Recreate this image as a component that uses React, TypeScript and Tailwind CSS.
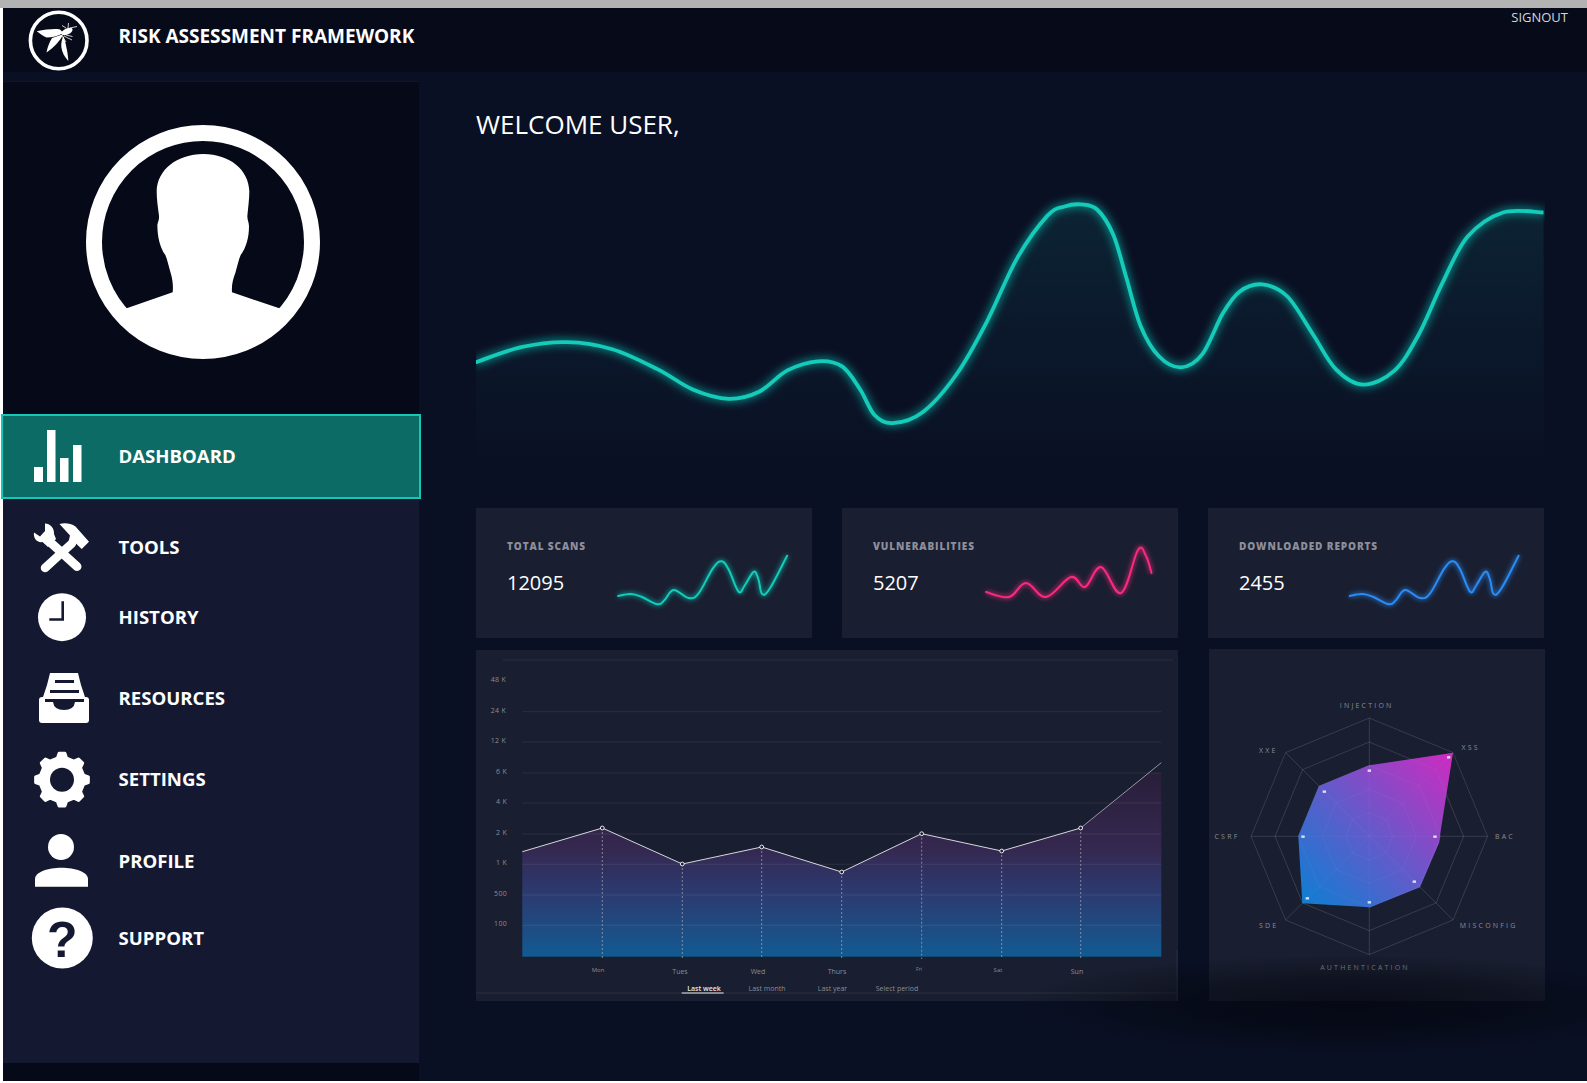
import React from "react";

type P = [number, number];

function smooth(pts: P[], t = 0.5): string {
  let d = `M${pts[0][0]} ${pts[0][1]}`;
  for (let i = 0; i < pts.length - 1; i++) {
    const p0 = pts[i - 1] || pts[i];
    const p1 = pts[i];
    const p2 = pts[i + 1];
    const p3 = pts[i + 2] || p2;
    const k = t / 3;
    const c1x = p1[0] + (p2[0] - p0[0]) * k;
    const c1y = p1[1] + (p2[1] - p0[1]) * k;
    const c2x = p2[0] - (p3[0] - p1[0]) * k;
    const c2y = p2[1] - (p3[1] - p1[1]) * k;
    d += ` C${c1x.toFixed(1)} ${c1y.toFixed(1)} ${c2x.toFixed(1)} ${c2y.toFixed(1)} ${p2[0].toFixed(1)} ${p2[1].toFixed(1)}`;
  }
  return d;
}

const R = 1.0121;
const waveRaw: P[] = [
  [470, 358], [515, 343], [560, 338], [605, 345], [650, 365], [685, 385], [720, 394], [750, 387], [778, 366], [808, 357], [832, 362], [850, 385], [864, 410], [882, 418], [912, 407], [945, 370], [975, 318], [1005, 255], [1035, 213], [1052, 204], [1068, 202], [1084, 207], [1100, 232], [1113, 275], [1127, 322], [1145, 352], [1167, 363], [1188, 350], [1208, 310], [1225, 288], [1247, 281], [1272, 293], [1297, 330], [1320, 365], [1347, 380], [1378, 366], [1402, 330], [1425, 280], [1450, 234], [1485, 210], [1525, 210],
];
const wave: P[] = waveRaw.map(([x, y]) => [x * R, y * R]);

const teal: P[] = ([
  [415, 288], [450, 282], [480, 290], [525, 313], [545, 300], [570, 270], [612, 294], [640, 280], [680, 205], [705, 184], [725, 210], [752, 275], [770, 255], [795, 215], [808, 240], [818, 282], [840, 265], [888, 167],
] as P[]).map(([x, y]) => [470 + x / 2.8, 500 + y / 3]);
const blue: P[] = teal.map(([x, y]) => [x + 732.5, y]);
const pink: P[] = [
  [986, 592], [1009, 597], [1026, 583], [1046, 597], [1071, 577], [1085, 587], [1101, 567], [1121, 593], [1138, 550], [1146, 556], [1151.5, 573],
];

function Logo() {
  return (
    <svg viewBox="24 8 72 64" className="w-[72px] h-[64px] shrink-0">
      <circle cx="58.7" cy="40.5" r="28.3" fill="none" stroke="#fff" strokeWidth="3.6" />
      <path d="M36.7 31.2 C46 29.5 55 28.5 60 29.5 L63.5 33 C58 36 52 37.5 46.5 37.5 C43 36 40 33.5 36.7 31.2 Z" fill="#fff" />
      <path d="M63.5 34 C60 41 54 47.5 46.5 52.5 C47.5 47 49.5 42 52 38 L58 36 Z" fill="#fff" />
      <path d="M63.5 36 C66 44 68 54 68.3 61 C64.5 57 62 52 61.3 47 C61 43 61.8 39 63.5 36 Z" fill="#fff" />
      <ellipse cx="67" cy="31.5" rx="6" ry="3" transform="rotate(-25 67 31.5)" fill="#fff" />
      <g stroke="#fff" strokeWidth="0.8" fill="none">
        <path d="M70 28 L77 26.5 M68 28 L68.5 23 M66 28 L62 25.5 M64 36 L72 40 M66 35 L72.5 36.5 M62 36 L66 42" />
      </g>
    </svg>
  );
}

function Avatar() {
  return (
    <svg viewBox="0 0 702 702" className="w-[234px] h-[234px]">
      <defs>
        <clipPath id="avatarClip">
          <circle cx="351" cy="351" r="310" />
        </clipPath>
      </defs>
      <g clipPath="url(#avatarClip)">
        <path
          transform="translate(-78 -46)"
          d="M200 596 L338 548 C340 530 338 510 332 490 C326 470 322 450 316 436 C300 415 292 380 292 345 C294 335 298 330 297 318 C294 295 290 270 290 245 C292 180 350 134 430 133 C510 134 566 180 568 245 C568 270 564 295 562 320 C562 332 567 338 567 350 C567 385 558 415 542 436 C536 450 532 470 526 490 C520 505 514 525 516 548 L658 596 L820 900 L40 900 Z"
          fill="#fff"
        />
      </g>
      <circle cx="351" cy="351" r="327" fill="none" stroke="#fff" strokeWidth="48" />
    </svg>
  );
}

const DARK = "#141931";

function IconDashboard() {
  return (
    <svg viewBox="0 0 60 60" className="w-[60px] h-[60px] overflow-visible">
      <rect x="2" y="41" width="9" height="15" fill="#fff" />
      <rect x="15" y="4" width="8.5" height="52" fill="#fff" />
      <rect x="28" y="32" width="8.5" height="24" fill="#fff" />
      <rect x="41" y="19" width="8.5" height="37" fill="#fff" />
    </svg>
  );
}

function IconTools() {
  return (
    <svg viewBox="0 0 60 60" className="w-[60px] h-[60px] overflow-visible">
      <path d="M40 26.3 L13 51" stroke="#fff" strokeWidth="8.5" strokeLinecap="round" />
      <path d="M27.5 7 C33 5.5 39 6.5 43.5 9.5 L57 24.7 L49.7 32 L44 26.5 L36.5 25 L38 18.5 Z" fill="#fff" />
      <path d="M18 25 L45 49.5" stroke="#fff" strokeWidth="9" strokeLinecap="round" />
      <path d="M13 6.5 C18 6.5 22.5 11 22 17 L24 22 L16 30 L10.5 25 C5 26 1 21 2 15.5 L8 19.5 L13 14 Z" fill="#fff" />
    </svg>
  );
}

function IconClock() {
  return (
    <svg viewBox="0 0 60 60" className="w-[60px] h-[60px] overflow-visible">
      <circle cx="30" cy="30.2" r="24" fill="#fff" />
      <path d="M30.7 14.2 V32.5 H17.3" fill="none" stroke={DARK} strokeWidth="2.6" />
    </svg>
  );
}

function IconResources() {
  return (
    <svg viewBox="0 0 60 60" className="w-[60px] h-[60px] overflow-visible">
      <g transform="translate(7 5)">
        <path d="M11 0 H39 L42 12 L46 24 H47 Q50 24 50 27 V47 Q50 50 47 50 H3 Q0 50 0 47 V27 Q0 24 3 24 H4 L8 12 Z" fill="#fff" />
        <rect x="16" y="7" width="19" height="3" fill={DARK} />
        <rect x="11" y="17" width="29" height="3" fill={DARK} />
        <path d="M6 26 H45 V29 H36 Q35 37 25 37 Q15 37 14 29 H6 Z" fill={DARK} />
      </g>
    </svg>
  );
}

function gearPath(cx: number, cy: number, ro: number, ri: number, n: number) {
  const pts: string[] = [];
  for (let i = 0; i < n; i++) {
    const a = (i / n) * Math.PI * 2 - Math.PI / 2;
    const s = (Math.PI * 2) / n;
    const list: [number, number][] = [
      [a - s * 0.27, ri],
      [a - s * 0.14, ro],
      [a + s * 0.14, ro],
      [a + s * 0.27, ri],
    ];
    for (const [an, r] of list) {
      pts.push(`${(cx + Math.cos(an) * r).toFixed(2)} ${(cy + Math.sin(an) * r).toFixed(2)}`);
    }
  }
  return "M" + pts.join(" L") + " Z";
}

function IconGear() {
  return (
    <svg viewBox="0 0 60 60" className="w-[60px] h-[60px] overflow-visible">
      <path d={gearPath(30, 30.7, 26.5, 22, 8)} fill="#fff" stroke="#fff" strokeWidth="3" strokeLinejoin="round" />
      <circle cx="30" cy="30.7" r="12" fill={DARK} />
    </svg>
  );
}

function IconProfile() {
  return (
    <svg viewBox="0 0 60 60" className="w-[60px] h-[60px] overflow-visible">
      <circle cx="29" cy="16" r="13" fill="#fff" />
      <path d="M3 55.7 V48 C3 41 16 36.7 29.5 36.7 C43 36.7 56 41 56 48 V55.7 Z" fill="#fff" />
    </svg>
  );
}

function IconSupport() {
  return (
    <svg viewBox="0 0 60 60" className="w-[60px] h-[60px] overflow-visible">
      <circle cx="30.3" cy="30" r="30.5" fill="#fff" />
      <text x="30.3" y="48.5" textAnchor="middle" fontSize="50" fontWeight="700" fontFamily="'Liberation Sans', sans-serif" fill={DARK}>?</text>
    </svg>
  );
}

function NavRow({ icon, label, className }: { icon: React.ReactNode; label: string; className: string }) {
  return (
    <div className={`flex items-center pl-[29px] gap-[26.5px] ${className}`}>
      {icon}
      <span className="text-white text-[18.6px] font-bold font-['Open_Sans',sans-serif]">{label}</span>
    </div>
  );
}

function Spark({ id, pts, color, viewBox }: { id: string; pts: P[]; color: string; viewBox: string }) {
  return (
    <svg viewBox={viewBox} className="w-[190px] h-[80px] shrink-0 mt-[14px] ml-auto">
      <defs>
        <filter id={id} x="-20%" y="-40%" width="140%" height="180%">
          <feGaussianBlur stdDeviation="2.5" />
        </filter>
      </defs>
      <path d={smooth(pts, 0.55)} fill="none" stroke={color} strokeOpacity="0.8" strokeWidth="3" filter={`url(#${id})`} />
      <path d={smooth(pts, 0.55)} fill="none" stroke={color} strokeWidth="2" strokeLinecap="round" />
    </svg>
  );
}

function StatCard(props: { title: string; value: string; id: string; pts: P[]; color: string; viewBox: string }) {
  return (
    <div className="w-[336px] h-[130px] bg-[#191e30] flex items-center pl-[31px] pr-[10px]">
      <div className="w-[100px] shrink-0 self-start pt-[30px] font-['Open_Sans',sans-serif]">
        <div className="text-[10px] leading-[16px] font-extrabold tracking-[0.9px] text-[#8d8f9b] whitespace-nowrap">{props.title}</div>
        <div className="text-[20px] leading-[28px] mt-[15px] text-white">{props.value}</div>
      </div>
      <Spark id={props.id} pts={props.pts} color={props.color} viewBox={props.viewBox} />
    </div>
  );
}

const chartPts: P[] = [
  [602.3, 828], [682.3, 864], [761.7, 847], [841.7, 872], [921.7, 833.7], [1001.7, 851], [1080.7, 828],
];

function LineChart() {
  const grid = [711.7, 742, 773, 803, 834, 864.3, 895, 925.3];
  const yl: [string, number, number][] = [
    ["48 K", 506, 681.5], ["24 K", 506, 713], ["12 K", 506, 743], ["6 K", 507, 774], ["4 K", 507, 804], ["2 K", 507, 835], ["1 K", 507, 865], ["500", 507, 896], ["100", 507, 926],
  ];
  const xl: [string, number, number, number][] = [
    ["Mon", 598, 971.5, 6], ["Tues", 680, 974, 7], ["Wed", 758, 974, 7], ["Thurs", 837, 974, 7], ["Fri", 919, 971, 5], ["Sat", 998, 972, 6], ["Sun", 1077, 974, 7],
  ];
  const tabs: [string, number][] = [["Last month", 767], ["Last year", 832.5], ["Select period", 897]];
  const all: P[] = [[522.3, 851.7], ...chartPts];
  const area = [...all, [1148.6, 773], [1161.3, 773], [1161.3, 956.3], [522.3, 956.3]].map((p) => p.join(",")).join(" ");
  return (
    <svg viewBox="476 650 702 351" className="w-[702px] h-[351px] block font-['Open_Sans',sans-serif]">
      <defs>
        <linearGradient id="areaG" gradientUnits="userSpaceOnUse" x1="0" y1="770" x2="0" y2="956">
          <stop offset="0" stopColor="#281e38" />
          <stop offset="0.42" stopColor="#352850" />
          <stop offset="0.66" stopColor="#2c3a70" />
          <stop offset="0.83" stopColor="#204a80" />
          <stop offset="1" stopColor="#115a92" />
        </linearGradient>
      </defs>
      <polygon points={area} fill="url(#areaG)" />
      <line x1="503" x2="1173" y1="660" y2="660" stroke="#2b2f3d" strokeWidth="1" />
      {grid.map((y) => (
        <line key={y} x1="522.3" x2="1161.3" y1={y} y2={y} stroke="#ffffff" strokeOpacity="0.08" strokeWidth="1" />
      ))}
      <line x1="522.3" x2="1161.3" y1="956.5" y2="956.5" stroke="#10486f" strokeWidth="1" />
      {chartPts.map(([x, y]) => (
        <line key={x} x1={x} x2={x} y1={y} y2="959" stroke="#9a9caa" strokeWidth="0.8" strokeDasharray="2 2" />
      ))}
      <polyline points={all.map((p) => p.join(",")).join(" ")} fill="none" stroke="#d6d7dc" strokeWidth="1" />
      <line x1="1080.7" y1="828" x2="1161.3" y2="762.7" stroke="#c8c9cf" strokeWidth="0.7" />
      {chartPts.map(([x, y]) => (
        <circle key={x} cx={x} cy={y} r="1.9" fill="#191e30" stroke="#fff" strokeWidth="0.9" />
      ))}
      {yl.map(([t, x, y]) => (
        <text key={t} x={x} y={y} textAnchor="end" fontSize="7" letterSpacing="0.3" fill="#8b8d98">{t}</text>
      ))}
      {xl.map(([t, x, y, s]) => (
        <text key={t} x={x} y={y} textAnchor="middle" fontSize={s} fill="#8b8d98">{t}</text>
      ))}
      <line x1="476" x2="1177" y1="993" y2="993" stroke="#2c3040" strokeWidth="1" />
      <text x="704" y="990.5" textAnchor="middle" fontSize="7" fontWeight="600" fill="#e6e7ea">Last week</text>
      <line x1="681.7" x2="723.7" y1="993" y2="993" stroke="#eeeeee" strokeWidth="1" />
      {tabs.map(([t, x]) => (
        <text key={t} x={x} y="990.5" textAnchor="middle" fontSize="7" fill="#8b8d98">{t}</text>
      ))}
      <line x1="1177" x2="1177" y1="950" y2="1001" stroke="#2a2e3c" strokeWidth="1" />
    </svg>
  );
}

function RadarChart() {
  const cx = 1369.3;
  const cy = 836.3;
  const rings = [118.3, 94.3, 71, 47, 23.6];
  const oct = (r: number) =>
    Array.from({ length: 8 }, (_, i) => {
      const a = (i * Math.PI) / 4 - Math.PI / 2;
      return `${(cx + Math.cos(a) * r).toFixed(1)},${(cy + Math.sin(a) * r).toFixed(1)}`;
    }).join(" ");
  const m = ([x, y]: P): P => [1200 + x / 3, 645 + y / 3];
  const shape = ([[508, 361], [759, 323], [721, 565], [718, 592], [660, 727], [510, 787], [307, 775], [295, 574], [357, 423]] as P[]).map(m);
  const dots = ([[508, 377], [746, 337], [705, 575], [643, 710], [508, 772], [322, 760], [309, 575], [373, 440]] as P[]).map(m);
  const labels: [string, number, number][] = [
    ["INJECTION", 1366.7, 707.8], ["XSS", 1470.7, 749.5], ["BAC", 1505, 838.8], ["MISCONFIG", 1488.7, 927.8], ["AUTHENTICATION", 1365, 969.8], ["SDE", 1268.7, 927.8], ["CSRF", 1227, 838.8], ["XXE", 1268.3, 752.8],
  ];
  const spokes = Array.from({ length: 8 }, (_, i) => (i * Math.PI) / 4);
  const gridLines = (op: number, prefix: string) => (
    <g stroke="#ffffff" strokeOpacity={op} strokeWidth="0.8" fill="none">
      {rings.map((r) => (
        <polygon key={prefix + r} points={oct(r)} />
      ))}
      {spokes.map((a) => (
        <line key={prefix + a} x1={cx} y1={cy} x2={cx + Math.cos(a) * 118.3} y2={cy + Math.sin(a) * 118.3} />
      ))}
    </g>
  );
  return (
    <svg viewBox="1209 649 336 352" className="w-[336px] h-[352px] block font-['Open_Sans',sans-serif]">
      <defs>
        <linearGradient id="radarG" gradientUnits="userSpaceOnUse" x1="1296" y1="905" x2="1453" y2="752">
          <stop offset="0" stopColor="#0a80d2" />
          <stop offset="0.45" stopColor="#5f5ccb" />
          <stop offset="1" stopColor="#cf2abf" />
        </linearGradient>
      </defs>
      {gridLines(0.13, "a")}
      <polygon points={shape.map((p) => p.join(",")).join(" ")} fill="url(#radarG)" />
      {gridLines(0.05, "b")}
      {dots.map(([x, y]) => (
        <rect key={x} x={x - 1.7} y={y - 1.2} width="3.4" height="2.4" fill="#dcdcf4" />
      ))}
      {labels.map(([t, x, y]) => (
        <text key={t} x={x} y={y} textAnchor="middle" fontSize="7" letterSpacing="2.2" fill="#8b8d96">{t}</text>
      ))}
    </svg>
  );
}

function BigWave() {
  const d = smooth(wave, 0.5);
  const area = `${d} L1544 480 L476 480 Z`;
  return (
    <svg viewBox="476 145 1069 363" className="w-[1069px] h-[363px] block">
      <defs>
        <linearGradient id="waveFill" gradientUnits="userSpaceOnUse" x1="0" y1="205" x2="0" y2="465">
          <stop offset="0" stopColor="#0c2434" />
          <stop offset="0.5" stopColor="#0b182b" />
          <stop offset="1" stopColor="#0a1024" />
        </linearGradient>
        <filter id="waveGlow" x="-5%" y="-10%" width="110%" height="120%">
          <feGaussianBlur stdDeviation="4" />
        </filter>
      </defs>
      <path d={area} fill="url(#waveFill)" />
      <path d={d} fill="none" stroke="#14d0bc" strokeOpacity="0.7" strokeWidth="6" filter="url(#waveGlow)" />
      <path d={d} fill="none" stroke="#14ccb9" strokeWidth="3.8" />
    </svg>
  );
}

export default function App() {
  return (
    <div className="relative w-[1587px] h-[1083px] overflow-hidden bg-white flex flex-col font-['Open_Sans',sans-serif]">
      <div className="h-2 shrink-0 bg-[#b3b3b3]" />
      <div className="flex-1 ml-[3px] mb-[2px] flex flex-col bg-[#0a1024] min-h-0">
        <header className="h-[64px] shrink-0 bg-[#060a19] flex items-center pl-[21px] gap-[22.6px]">
          <Logo />
          <div className="text-white text-[19px] font-bold mb-[7px] whitespace-nowrap">RISK ASSESSMENT FRAMEWORK</div>
          <div className="ml-auto self-start pr-[19px] text-[13px] leading-[18px] text-[#d4d6dc]">SIGNOUT</div>
        </header>
        <div className="flex-1 flex min-h-0">
          <aside className="w-[416px] shrink-0 mt-[9px] flex flex-col bg-[#141931]">
            <div className="h-[333px] shrink-0 bg-[#060a18] border-t border-[#11162a] pl-[83px] pt-[43px]">
              <Avatar />
            </div>
            <NavRow
              icon={<IconDashboard />}
              label="DASHBOARD"
              className="h-[85px] shrink-0 -ml-[2px] w-[420px] pb-px border-2 border-[#14c8b8] bg-[#0c6b64] relative"
            />
            <div className="h-[13px] shrink-0" />
            <NavRow icon={<IconTools />} label="TOOLS" className="h-[70px] shrink-0" />
            <NavRow icon={<IconClock />} label="HISTORY" className="h-[70px] shrink-0" />
            <NavRow icon={<IconResources />} label="RESOURCES" className="h-[92px] shrink-0" />
            <NavRow icon={<IconGear />} label="SETTINGS" className="h-[70px] shrink-0" />
            <NavRow icon={<IconProfile />} label="PROFILE" className="h-[94px] shrink-0" />
            <NavRow icon={<IconSupport />} label="SUPPORT" className="h-[60px] shrink-0" />
            <div className="flex-1" />
            <div className="h-[18px] shrink-0 bg-[#060a18]" />
          </aside>
          <main className="flex-1 pl-[57px] pt-[31px]">
            <h1 className="text-[26px] leading-[42px] text-white font-normal">WELCOME USER,</h1>
            <BigWave />
            <div className="flex gap-[30px]">
              <StatCard title="TOTAL SCANS" value="12095" id="gTeal" pts={teal} color="#14ccb9" viewBox="612 540 190 80" />
              <StatCard title="VULNERABILITIES" value="5207" id="gPink" pts={pink} color="#fb2a7f" viewBox="978 540 190 80" />
              <StatCard title="DOWNLOADED REPORTS" value="2455" id="gBlue" pts={blue} color="#2a8cf5" viewBox="1345 540 190 80" />
            </div>
            <div className="flex items-start gap-[31px] mt-[11px]">
              <div className="w-[702px] h-[351px] mt-px bg-[#191e30]">
                <LineChart />
              </div>
              <div className="w-[336px] h-[352px] bg-[#191e30]">
                <RadarChart />
              </div>
            </div>
          </main>
        </div>
      </div>
      <div className="absolute left-[1020px] top-[955px] w-[660px] h-[100px] pointer-events-none bg-[radial-gradient(closest-side,rgba(3,5,12,0.65),rgba(3,5,12,0.45)_50%,rgba(3,5,12,0))]" />
    </div>
  );
}
